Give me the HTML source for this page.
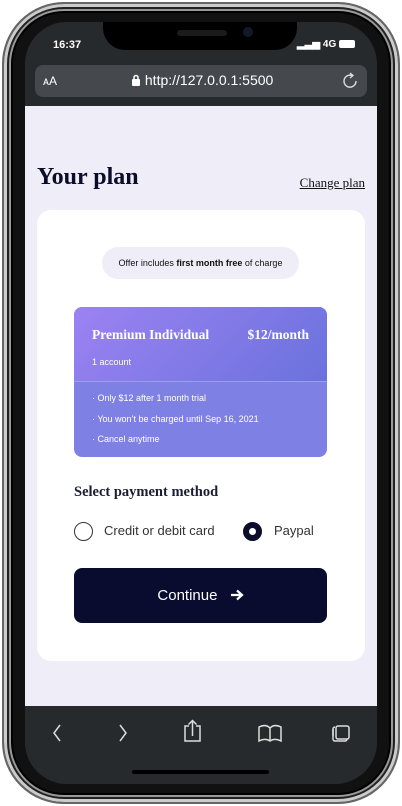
<!DOCTYPE html>
<html><head><meta charset="utf-8"><style>
*{margin:0;padding:0;box-sizing:border-box}
body{width:402px;height:806px;background:#fff;position:relative;overflow:hidden;font-family:"Liberation Sans",sans-serif}
.phone{position:absolute;left:2px;top:2px;width:398px;height:802px;border-radius:62px;background:#111;border:2px solid #666;box-shadow:inset 0 0 0 3px #ccc,inset 0 0 0 5px #222,inset 0 0 0 7px #999,inset 0 0 0 9px #000}
.screen{position:absolute;left:25px;top:22px;width:352px;height:762px;border-radius:42px;overflow:hidden;background:#262a2d}
.notch{position:absolute;left:78px;top:0;width:194px;height:28px;background:#000;border-radius:0 0 22px 22px}
.spk{position:absolute;top:8px;width:50px;height:6px;border-radius:3px;background:#1b1b1b}
.cam{position:absolute;top:5px;width:10px;height:10px;border-radius:50%;background:#12182a}
.time{position:absolute;left:28px;top:17px;color:#fff;font-weight:bold;font-size:11px}
.stat{position:absolute;right:22px;top:17px;color:#fff;font-weight:bold;font-size:10px}
.url{position:absolute;left:10px;top:43px;width:332px;height:32px;border-radius:8px;background:#45494d;color:#fff}
.content{position:absolute;left:0;top:84px;width:352px;height:600px;background:#efeef8}
h1{position:absolute;left:12px;top:58px;font-family:"Liberation Serif",serif;font-size:24px;font-weight:bold;color:#0b0d2a}
.cp{position:absolute;right:12px;top:69px;font-family:"Liberation Serif",serif;font-size:13px;color:#111;text-decoration:underline}
.card{position:absolute;left:12px;top:104px;width:328px;height:451px;background:#fff;border-radius:14px}
.pill{position:absolute;left:65px;top:37px;width:197px;height:32px;border-radius:16px;background:#efeef8;font-size:9px;text-align:center;line-height:32px;color:#111}
.plan{position:absolute;left:37px;top:97px;width:253px;height:150px;border-radius:8px;overflow:hidden;background:#7f80e4;color:#fff}
.ptop{height:75px;background:linear-gradient(135deg,#9c82f2,#6a72dd);border-bottom:1px solid #9a9ef0;position:relative}
.ptop b{position:absolute;top:20px;font-family:"Liberation Serif",serif;font-size:13.5px}
.plan .s{font-size:9px;position:absolute;left:18px}
.sel{position:absolute;left:37px;top:274px;font-family:"Liberation Serif",serif;font-weight:bold;font-size:14.5px;color:#1b1d33}
.r{position:absolute;top:312px;width:19px;height:19px;border-radius:50%}
.rl{position:absolute;top:313px;font-size:13px;color:#333}
.btn{position:absolute;left:37px;top:358px;width:253px;height:55px;border-radius:8px;background:#090c2e;color:#fff;font-size:15px;text-align:center;line-height:55px}
.bar{position:absolute;left:0;top:684px;width:352px;height:78px;background:#262a2d}
.home{position:absolute;left:107px;top:64px;width:137px;height:4px;border-radius:2px;background:#000}
</style></head><body>
<div class="phone"></div>
<div class="screen">
 <div class="notch"><div class="spk" style="left:74px"></div><div class="cam" style="left:140px"></div></div>
 <div class="time">16:37</div>
 <div class="stat">▂▃▅ 4G <span style="display:inline-block;width:16px;height:8px;background:#fff;border-radius:2px;vertical-align:-1px"></span></div>
 <div class="url">
  <span style="position:absolute;left:8px;top:9px;font-size:12px">ᴀA</span>
  <span style="position:absolute;left:96px;top:7px;font-size:14px"><svg width="10" height="12" viewBox="0 0 10 12" style="vertical-align:-1px"><rect x="1" y="5" width="8" height="7" rx="1" fill="#fff"/><path d="M3 5V3.5a2 2 0 0 1 4 0V5" stroke="#fff" stroke-width="1.5" fill="none"/></svg> http://127.0.0.1:5500</span>
  <svg style="position:absolute;right:8px;top:7px" width="18" height="18" viewBox="0 0 18 18"><path d="M11 3.5A6 6 0 1 0 15 9" stroke="#ddd" stroke-width="1.4" fill="none"/><path d="M9 1l3 2.5-3 2.5" stroke="#ddd" stroke-width="1.4" fill="none"/></svg>
 </div>
 <div class="content">
  <h1>Your plan</h1>
  <div class="cp">Change plan</div>
  <div class="card">
   <div class="pill">Offer includes <b>first month free</b> of charge</div>
   <div class="plan">
    <div class="ptop"><b style="left:18px">Premium Individual</b><b style="right:18px">$12/month</b><span class="s" style="top:50px">1 account</span></div>
    <span class="s" style="top:86px">· Only $12 after 1 month trial</span>
    <span class="s" style="top:107px">· You won’t be charged until Sep 16, 2021</span>
    <span class="s" style="top:127px">· Cancel anytime</span>
   </div>
   <div class="sel">Select payment method</div>
   <div class="r" style="left:37px;border:1.5px solid #333"></div>
   <div class="rl" style="left:67px">Credit or debit card</div>
   <div class="r" style="left:206px;border:6px solid #0b0d2a;background:#fff"></div>
   <div class="rl" style="left:237px">Paypal</div>
   <div class="btn">Continue <svg width="14" height="12" viewBox="0 0 14 12" style="margin-left:8px;vertical-align:-1px"><path d="M1 6h11M7 1.5L12 6 7 10.5" stroke="#fff" stroke-width="2.2" fill="none"/></svg></div>
  </div>
 </div>
 <div class="bar">
  <svg width="352" height="60" viewBox="0 0 352 60" style="position:absolute;left:0;top:0" stroke="#ddd" stroke-width="1.5" fill="none">
   <path d="M35 19l-6 8 6 8"/><path d="M95 19l6 8-6 8"/>
   <path d="M164 20h-4v15h15v-15h-4M167.5 30V15M163.5 18.5l4-4 4 4"/>
   <path d="M234 21c4-2 8-2 11 1 3-3 7-3 11-1v14c-4-2-8-2-11 0-3-2-7-2-11 0zM245 22v13"/>
   <rect x="311" y="20" width="13" height="13" rx="2"/><path d="M308 30v-7a2 2 0 0 1 2-2"/><path d="M308 23v10a2 2 0 0 0 2 2h10a2 2 0 0 0 2-2"/>
  </svg>
  <div class="home"></div>
 </div>
</div>
</body></html>
